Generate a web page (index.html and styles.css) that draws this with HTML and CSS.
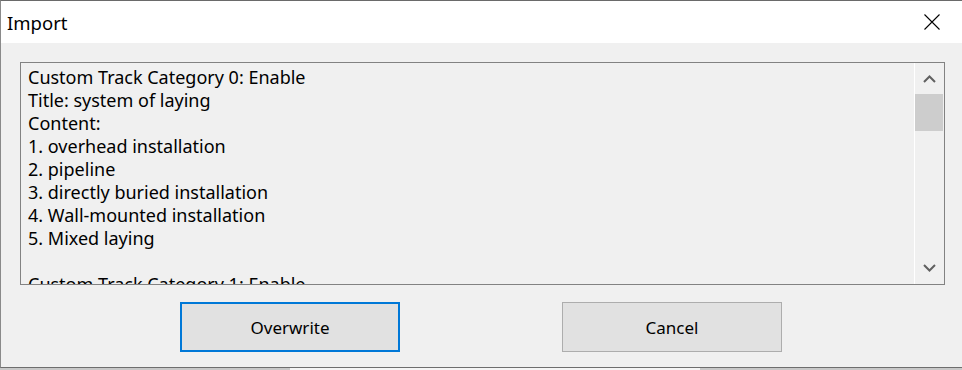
FILE: index.html
```html
<!DOCTYPE html>
<html lang="en">

<head>
    <meta charset="UTF-8">
    <title>Import</title>
    <link rel="stylesheet" href="styles.css">
</head>

<body>
    <div class="dialog">
        <div class="titlebar">
            <span class="title">Import</span>
            <svg class="close" width="16" height="16" viewBox="0 0 16 16">
                <path d="M0.5 0.5 L15.5 15.5 M15.5 0.5 L0.5 15.5" stroke="#000" stroke-width="1.1" fill="none" />
            </svg>
        </div>
        <div class="content">
            <div class="textbox">
                <div class="lines">
                    <div>Custom Track Category 0: Enable</div>
                    <div>Title: system of laying</div>
                    <div>Content:</div>
                    <div>1. overhead installation</div>
                    <div>2. pipeline</div>
                    <div>3. directly buried installation</div>
                    <div>4. Wall-mounted installation</div>
                    <div>5. Mixed laying</div>
                    <div>&nbsp;</div>
                    <div>Custom Track Category 1: Enable</div>
                </div>
                <div class="scrollbar">
                    <svg class="arrow" width="13" height="8" viewBox="0 0 13 8">
                        <path d="M1 7 L6.5 1.5 L12 7" stroke="#606060" stroke-width="2" fill="none" />
                    </svg>
                    <div class="thumb"></div>
                    <div class="track"></div>
                    <svg class="arrow" width="13" height="8" viewBox="0 0 13 8">
                        <path d="M1 1 L6.5 6.5 L12 1" stroke="#606060" stroke-width="2" fill="none" />
                    </svg>
                </div>
            </div>
            <div class="buttons">
                <button class="btn default">Overwrite</button>
                <button class="btn">Cancel</button>
            </div>
        </div>
    </div>
    <div class="backdrop"></div>
</body>

</html>
```

FILE: styles.css
```css
/* page */
body {
    margin: 0;
    width: 962px;
    height: 370px;
    overflow: hidden;
    background: #ffffff;
    font-family: "Noto Sans", "Open Sans", sans-serif;
    color: #000000;
}

/* dialog window */
.dialog {
    height: 366px;
    border-top: 1px solid #6a6a6a;
    border-left: 1px solid #8a8a8a;
    border-bottom: 1px solid #6e6e6e;
    background-color: #f0f0f0;
    display: flex;
    flex-direction: column;
}

.titlebar {
    height: 42px;
    background-color: #ffffff;
    display: flex;
    align-items: center;
    justify-content: space-between;
    padding: 0 22px 0 6px;
}

.title {
    font-size: 18.5px;
}

.close {
    display: block;
    margin-top: -1px;
}

.content {
    padding: 19px 17px 0 19px;
}

/* multiline text box */
.textbox {
    height: 221px;
    border: 1px solid #828282;
    display: flex;
    overflow: hidden;
}

.lines {
    flex: 1;
    padding: 3px 0 0 7px;
    font-size: 18px;
    line-height: 23px;
    white-space: nowrap;
    overflow: hidden;
}

.scrollbar {
    width: 28px;
    border-left: 1px solid #ffffff;
    margin-right: 1px;
    display: flex;
    flex-direction: column;
    align-items: center;
}

.arrow {
    display: block;
    margin: 12px 0 12px;
}

.thumb {
    align-self: stretch;
    height: 37px;
    background-color: #cdcdcd;
    margin-top: -1px;
}

.track {
    flex: 1;
}

/* buttons */
.buttons {
    display: flex;
    gap: 162px;
    padding: 17px 0 0 160px;
}

.btn {
    width: 220px;
    height: 50px;
    font-family: "Noto Sans", "Open Sans", sans-serif;
    font-size: 17px;
    color: #000000;
    background-color: #e1e1e1;
    border: 1px solid #adadad;
    padding: 0;
}

.btn.default {
    border: 2px solid #0078d7;
}

.backdrop {
    height: 2px;
    background: linear-gradient(90deg, #c8c8c8 0 290px, #f5f5f5 290px 700px, #c8c8c8 700px);
}
```
